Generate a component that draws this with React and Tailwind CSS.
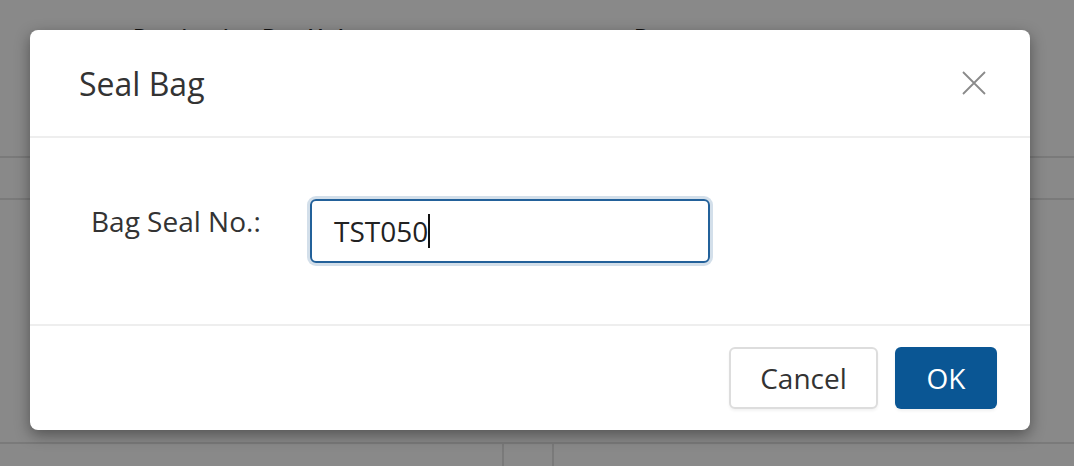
import React from "react";

const SealBagModal = () => {
  return (
    <div className="relative h-[466px] w-[1074px] overflow-hidden bg-white font-['Open_Sans',sans-serif] text-[#333]">

      {/* Page behind the overlay */}
      <div className="flex h-[158px] border-b-2 border-[#e3e3e3]">
        <div className="w-[504px] pl-[133px] pt-[20px] text-[22px] font-semibold text-[#222]">Destination Bag Hub</div>
        <div className="pl-[130px] pt-[20px] text-[22px] font-semibold text-[#222]">Bag</div>
      </div>
      <div className="h-[42px] border-b-2 border-[#e3e3e3]"></div>
      <div className="h-[244px] border-b-2 border-[#e3e3e3]"></div>
      <div className="flex h-[40px]">
        <div className="w-[504px] border-r-2 border-[#e3e3e3]"></div>
        <div className="w-[50px] border-r-2 border-[#e3e3e3]"></div>
      </div>

      {/* Backdrop */}
      <div className="absolute inset-0 bg-black/[0.463]"></div>

      {/* Dialog */}
      <div className="absolute left-[30px] top-[30px] flex h-[400px] w-[1000px] flex-col rounded-[8px] bg-white shadow-[0_5px_15px_rgba(0,0,0,0.4)]">
        {/* Header */}
        <div className="flex h-[108px] items-center justify-between border-b-2 border-[#eeeeee] pl-[49px] pr-[44px]">
          <h4 className="pt-[2px] text-[32px] leading-none text-[#333]">Seal Bag</h4>
          <svg width="24" height="24" viewBox="0 0 24 24" className="text-[#8a8a8a]">
            <path d="M1 1 L23 23 M23 1 L1 23" stroke="currentColor" strokeWidth="1.8" fill="none" />
          </svg>
        </div>

        {/* Body */}
        <div className="flex flex-1 items-start border-b-2 border-[#eeeeee] pl-[61px] pt-[61px]">
          <label className="w-[219px] pt-[2px] text-[28px] leading-[40px] text-[#333]">Bag Seal No.:</label>
          <div className="flex h-[64px] w-[400px] items-center rounded-[6px] border-2 border-[#23619a] px-[22px] text-[28px] text-[#222] shadow-[0_0_0_3px_#d3dfea]">
            <span>TST050</span>
            <span className="h-[34px] w-[2px] bg-[#111]"></span>
          </div>
        </div>

        {/* Footer */}
        <div className="flex h-[104px] items-center justify-end gap-[17px] pr-[33px]">
          <button className="h-[62px] w-[149px] rounded-[6px] border-2 border-[#dddddd] bg-white text-[28px] text-[#333] shadow-[0_2px_3px_rgba(0,0,0,0.05)]">
            Cancel
          </button>
          <button className="h-[62px] w-[102px] rounded-[6px] bg-[#0a5694] text-[28px] text-white shadow-[0_2px_3px_rgba(0,0,0,0.06)]">
            OK
          </button>
        </div>
      </div>
    </div>
  );
};

export default function App() {
  return <SealBagModal />;
}
